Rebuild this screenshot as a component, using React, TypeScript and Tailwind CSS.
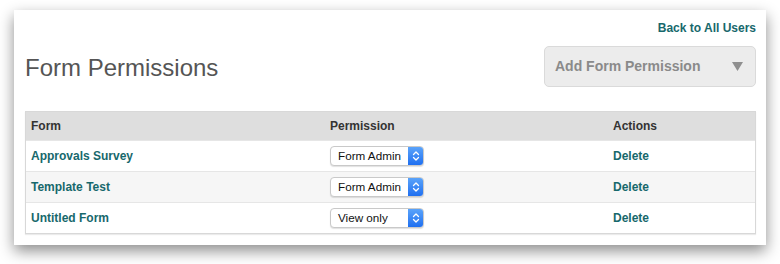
import React from "react";

const rows = [
  { form: "Approvals Survey", perm: "Form Admin" },
  { form: "Template Test", perm: "Form Admin" },
  { form: "Untitled Form", perm: "View only" },
];

function MacSelect({ value }: { value: string }) {
  return (
    <div className="flex h-[20px] w-[94px] items-stretch overflow-hidden rounded-[4px] border border-[#c9c9c9] bg-white shadow-[0_1px_1px_rgba(0,0,0,0.12)]">
      <div className="flex flex-1 items-center pl-[7px] text-[11.7px] text-[#111]">{value}</div>
      <div className="flex w-[15px] items-center justify-center bg-gradient-to-b from-[#5aa3fa] to-[#1f6ff0]">
        <svg width="8" height="12" viewBox="0 0 8 12" fill="none" stroke="white" strokeWidth="1.3" strokeLinecap="round" strokeLinejoin="round">
          <path d="M1.5 4.5 L4 2 L6.5 4.5" />
          <path d="M1.5 7.5 L4 10 L6.5 7.5" />
        </svg>
      </div>
    </div>
  );
}

export default function App() {
  return (
    <div className="h-[264px] w-[780px] bg-white pl-[14px] pt-[10px]" style={{ fontFamily: '"Liberation Sans", Arial, sans-serif' }}>
      <div className="flex h-[235px] w-[752px] flex-col bg-white px-[11px] pr-[10px] pt-[10px] shadow-[0_6px_14px_rgba(0,0,0,0.45)]">
        <div className="flex justify-end">
          <a className="text-[12px] font-bold leading-[16px] text-[#17686c]">Back to All Users</a>
        </div>
        <div className="mt-[10px] flex items-center justify-between">
          <h1 className="pt-[2px] text-[24px] leading-[28px] text-[#555]">Form Permissions</h1>
          <div className="flex h-[41px] w-[212px] items-center justify-between rounded-[5px] border border-[#dadada] bg-[#ececec] pl-[10px] pr-[12px]">
            <span className="text-[14px] font-bold text-[#8a8a8a]">Add Form Permission</span>
            <svg width="11" height="9" viewBox="0 0 11 9">
              <path d="M0 0 H11 L5.5 9 Z" fill="#8f8f8f" />
            </svg>
          </div>
        </div>
        <div className="mt-[24px] border border-[#d8d8d8] shadow-[0_1px_1px_rgba(0,0,0,0.08)]">
          <div className="grid h-[28px] grid-cols-[299px_283px_1fr] items-center bg-[#dedede] pl-[5px] text-[12px] font-bold text-[#333]">
            <span>Form</span>
            <span>Permission</span>
            <span>Actions</span>
          </div>
          {rows.map((r, i) => (
            <div
              key={r.form}
              className={`grid h-[31px] grid-cols-[299px_283px_1fr] items-center border-t border-[#e6e6e6] pl-[5px] text-[12px] ${i === 1 ? "bg-[#f6f6f6]" : "bg-white"}`}
            >
              <span className="font-bold text-[#17686c]">{r.form}</span>
              <div>
                <MacSelect value={r.perm} />
              </div>
              <span className="font-bold text-[#17686c]">Delete</span>
            </div>
          ))}
        </div>
      </div>
    </div>
  );
}
